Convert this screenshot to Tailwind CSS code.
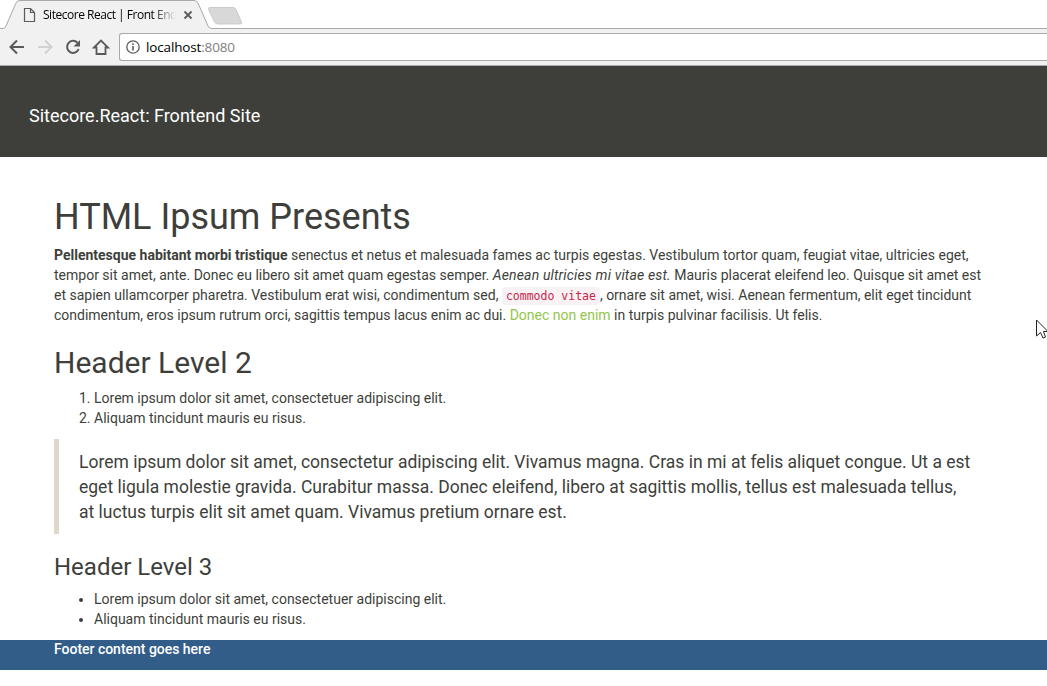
<!DOCTYPE html>
<html lang="en">
<head>
<meta charset="utf-8">
<title>Sitecore React | Front End</title>
<script src="https://cdn.jsdelivr.net/npm/@tailwindcss/browser@4"></script>
</head>
<body class="relative h-[686px] w-[1047px] overflow-hidden bg-white font-['Roboto',sans-serif] text-sm leading-5 text-[#3e3f3a]">
<div class="relative h-[66px] border-b border-[#a9a9a9] bg-[#f2f1f2]">
  <div class="relative h-[29px]">
    <svg class="absolute inset-0" width="1047" height="29" viewBox="0 0 1047 29" fill="none">
      <path d="M0 0H1047V28H212Q209 28 208 26L198 3Q197 .5 194 .5H20Q17 .5 16 3L6 26Q5 28 3 28H0Z" fill="#fff"/>
      <path d="M0 28.5H3Q5 28.5 6 26L16 3Q17 .5 20 .5H194Q197 .5 198 3L208 26Q209 28.5 212 28.5H1047V29H0Z" fill="#f2f1f2"/>
      <path d="M0 28.5H3Q5 28.5 6 26L16 3Q17 .5 20 .5H194Q197 .5 198 3L208 26Q209 28.5 212 28.5H1047" stroke="#aaa9aa"/>
      <path d="M210 7.5H233Q235 7.5 236 9.5L241.500 22Q242.500 24 240 24H218Q215.500 24 214.500 22L208.500 9.500Q208 7.500 210 7.500Z" fill="#d8d8d8" stroke="#cbcbcb"/>
      <path d="M24.500 8.500H30.500L34.500 12.500V21.500H24.500ZM30.500 8.500V12.500H34.500" stroke="#5a5a5a" stroke-width="1.200"/>
      <path d="M184.500 11.500L191.500 18.500M191.500 11.500L184.500 18.500" stroke="#5a5a5a" stroke-width="1.800"/>
    </svg>
    <div class="relative flex h-[29px] items-center pl-[43px]">
      <span class="w-[133px] whitespace-nowrap bg-gradient-to-r from-black from-82% to-transparent bg-clip-text font-['Open_Sans',sans-serif] text-[12px] tracking-[-0.48px] text-transparent">Sitecore React | Front End</span>
    </div>
  </div>
  <div class="flex h-[36px] items-center">
    <svg class="shrink-0" width="119" height="36" viewBox="0 29 119 36" fill="none" stroke="#5a5a5a" stroke-width="2">
      <path d="M24 47H11M17 40.500L10.500 47L17 53.500"/>
      <path d="M38 47H51M45 40.500L51.500 47L45 53.500" stroke="#d2d2d2"/>
      <path d="M77.500 42.800A6 6 0 1 0 78.700 49"/>
      <path d="M80 40V46.500H73.500Z" fill="#5a5a5a" stroke="none"/>
      <path d="M94 47.500L101 40.500L108 47.500H105.500V54H96.500V47.500Z" stroke-width="1.800"/>
    </svg>
    <div class="flex h-[28px] flex-1 items-center rounded-l-[3px] border border-r-0 border-[#a9a9a9] bg-white pl-[6px]">
      <svg class="mr-[6px]" width="14" height="14" viewBox="0 0 14 14" fill="none" stroke="#5a5a5a">
        <circle cx="7" cy="7" r="6.200" stroke-width="1.300"/>
        <path d="M7 6V10.500M7 3.300V5" stroke-width="1.600"/>
      </svg>
      <span class="font-['Open_Sans',sans-serif] text-[13.500px] tracking-[-0.15px] text-black">localhost<span class="text-[#808080]">:8080</span></span>
    </div>
  </div>
</div>
<header class="h-[91px] bg-[#3e3f3a] pt-[40px] pl-[29px] text-[18px] text-white">Sitecore.React: Frontend Site</header>
<main class="h-[483px] pt-[40px] pl-[54px] whitespace-nowrap">
  <h1 class="mb-[8px] text-[36px] leading-[40px]">HTML Ipsum Presents</h1>
  <p class="mb-[21px]"><strong class="font-bold">Pellentesque habitant morbi tristique</strong> senectus et netus et malesuada fames ac turpis egestas. Vestibulum tortor quam, feugiat vitae, ultricies eget,<br>tempor sit amet, ante. Donec eu libero sit amet quam egestas semper. <em class="tracking-[0.15px]">Aenean ultricies mi vitae est.</em> Mauris placerat eleifend leo. Quisque sit amet est<br>et sapien ullamcorper pharetra. Vestibulum erat wisi, condimentum sed, <code class="rounded bg-[#f9f2f4] px-1 py-[2px] font-['DejaVu_Sans_Mono',monospace] text-[11.5px] leading-none text-[#c7254e]">commodo vitae</code>, ornare sit amet, wisi. Aenean fermentum, elit eget tincidunt<br>condimentum, eros ipsum rutrum orci, sagittis tempus lacus enim ac dui. <a class="text-[#93c54b]">Donec non enim</a> in turpis pulvinar facilisis. Ut felis.</p>
  <h2 class="mb-[9px] text-[30px] leading-[33px]">Header Level 2</h2>
  <ol class="mb-[11px] list-decimal pl-[40px]"><li>Lorem ipsum dolor sit amet, consectetuer adipiscing elit.</li><li>Aliquam tincidunt mauris eu risus.</li></ol>
  <blockquote class="mb-[20px] h-[95px] border-l-[5px] border-[#dfd7ca] pt-[11px] pl-[20px] text-[17.5px] leading-[25px]">Lorem ipsum dolor sit amet, consectetur adipiscing elit. Vivamus magna. Cras in mi at felis aliquet congue. Ut a est<br>eget ligula molestie gravida. Curabitur massa. Donec eleifend, libero at sagittis mollis, tellus est malesuada tellus,<br>at luctus turpis elit sit amet quam. Vivamus pretium ornare est.</blockquote>
  <h3 class="mb-[9px] text-[24px] leading-[26px]">Header Level 3</h3>
  <ul class="list-disc pl-[40px]"><li>Lorem ipsum dolor sit amet, consectetuer adipiscing elit.</li><li>Aliquam tincidunt mauris eu risus.</li></ul>
</main>
<footer class="h-[30px] bg-[#325d88] pl-[54px] leading-[18px] font-medium tracking-[-0.02px] text-white">Footer content goes here</footer>
<svg class="absolute top-[319px] left-[1036px]" width="11" height="20" viewBox="0 0 11 20"><path d="M.5 1V17L4.500 13.500L7 19L9.500 18L7.500 12.500H12Z" fill="#fff" stroke="#222"/></svg>
</body>
</html>
